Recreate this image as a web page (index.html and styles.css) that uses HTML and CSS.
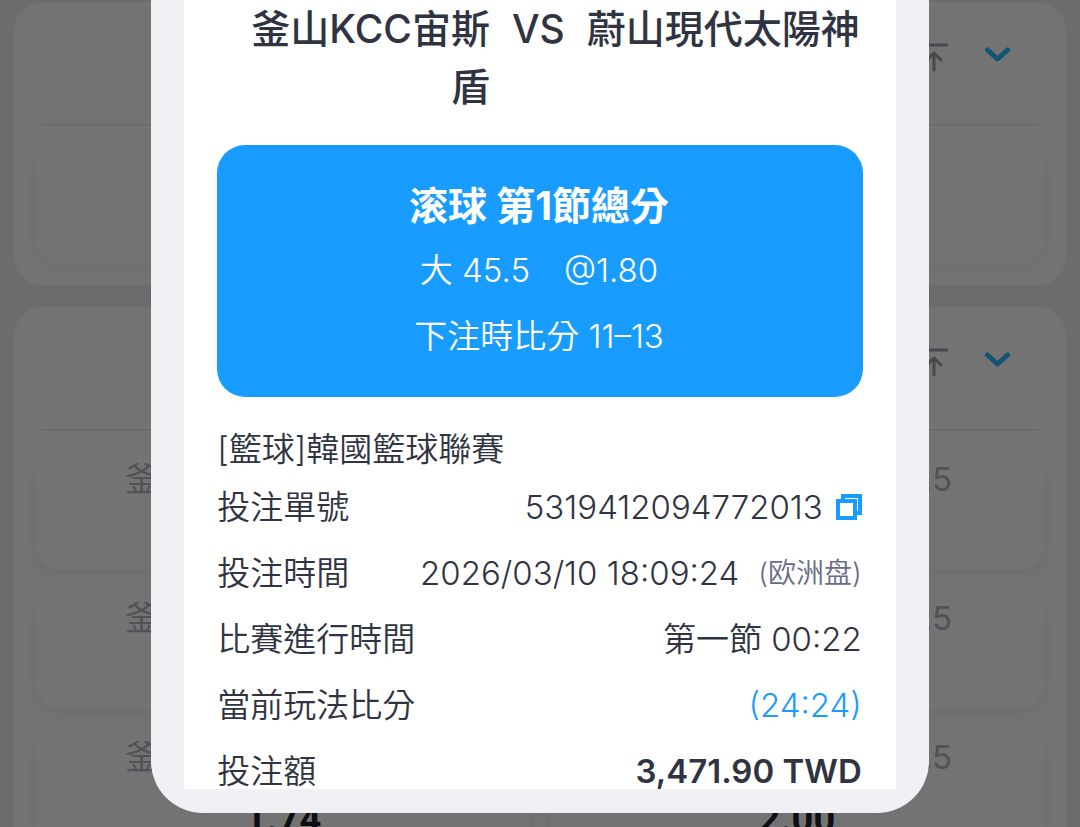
FILE: index.html
```html
<!DOCTYPE html>
<html lang="zh-Hant">
<head>
<meta charset="utf-8">
<meta name="viewport" content="width=device-width, initial-scale=1">
<title>注單詳情</title>
<link rel="stylesheet" href="styles.css">
</head>
<body>
<main class="markets">
  <section class="market">
    <header class="market-head">
      <button class="icon-btn" type="button" aria-label="置頂"><svg class="icon icon-top" viewBox="0 0 28 32"><path d="M1 3H27M14 28V11M7 18L14 11L21 18"/></svg></button>
      <button class="icon-btn" type="button" aria-label="收起"><svg class="icon icon-fold" viewBox="0 0 28 32"><path d="M3.500 8L13.500 17L23.500 8"/></svg></button>
    </header>
    <div class="odds-row"><div class="cell cell-wide"></div></div>
  </section>
  <section class="market">
    <header class="market-head">
      <button class="icon-btn" type="button" aria-label="置頂"><svg class="icon icon-top" viewBox="0 0 28 32"><path d="M1 3H27M14 28V11M7 18L14 11L21 18"/></svg></button>
      <button class="icon-btn" type="button" aria-label="收起"><svg class="icon icon-fold" viewBox="0 0 28 32"><path d="M3.500 8L13.500 17L23.500 8"/></svg></button>
    </header>
    <div class="odds-row">
      <div class="cell"><span class="cell-name">釜</span></div>
      <div class="cell"><span class="cell-name cell-name-end">.5</span></div>
    </div>
    <div class="odds-row">
      <div class="cell"><span class="cell-name">釜</span></div>
      <div class="cell"><span class="cell-name cell-name-end">.5</span></div>
    </div>
    <div class="odds-row">
      <div class="cell"><span class="cell-name">釜</span><span class="cell-odds">1.74</span></div>
      <div class="cell"><span class="cell-name cell-name-end">.5</span><span class="cell-odds">2.00</span></div>
    </div>
  </section>
</main>

<div class="overlay">
  <div class="dialog" role="dialog" aria-modal="true" aria-labelledby="match">
    <div class="slip">
      <h2 class="match" id="match">
        <span>釜山KCC宙斯</span><span>VS</span><span>蔚山現代太陽神</span><span class="match-tail">盾</span>
      </h2>
      <div class="pick">
        <p class="pick-title">滚球 第1節總分</p>
        <p class="pick-line"><span>大 <span class="num">45.5</span></span><span class="num">@1.80</span></p>
        <p class="pick-line"><span>下注時比分 <span class="num">11–13</span></span></p>
      </div>
      <p class="league">[籃球]韓國籃球聯賽</p>
      <dl class="details">
        <div class="detail">
          <dt>投注單號</dt>
          <dd><span class="num">5319412094772013</span><button class="copy" type="button" aria-label="複製"><svg class="icon-copy" viewBox="0 0 26 26"><path d="M2 7H19V24H2ZM7 7V2H24V19H19"/></svg></button></dd>
        </div>
        <div class="detail">
          <dt>投注時間</dt>
          <dd class="spaced"><span class="num">2026/03/10 18:09:24</span><small class="odds-type">(欧洲盘)</small></dd>
        </div>
        <div class="detail">
          <dt>比賽進行時間</dt>
          <dd><span>第一節 <span class="num">00:22</span></span></dd>
        </div>
        <div class="detail">
          <dt>當前玩法比分</dt>
          <dd class="score num">(24:24)</dd>
        </div>
        <div class="detail">
          <dt>投注額</dt>
          <dd class="stake num">3,471.90 TWD</dd>
        </div>
      </dl>
    </div>
  </div>
</div>
</body>
</html>
```

FILE: styles.css
```css
* { box-sizing: border-box; }

html, body { height: 100%; }

body {
  margin: 0;
  overflow: hidden;
  background: #f0f0f5;
  color: #303442;
  font-family: Inter, "Noto Sans CJK TC", sans-serif;
  font-size: 33px;
}

h2, p, dl, dd { margin: 0; }

button {
  display: flex;
  padding: 0;
  border: 0;
  background: none;
}

/* Market list behind the dialog */
.markets {
  display: flex;
  flex-direction: column;
  gap: 22px;
  padding: 2px 14px;
}

.market {
  display: flex;
  flex-direction: column;
  gap: 19px;
  padding: 0 22px 20px;
  border-radius: 28px;
  background: #fff;
}

.market-head {
  display: flex;
  justify-content: flex-end;
  gap: 36px;
  height: 124px;
  margin: 0 5px;
  padding: 40px 27px 0;
  border-bottom: 2px solid #efeff3;
}

.icon {
  width: 28px;
  height: 32px;
  fill: none;
  stroke-linecap: round;
  stroke-linejoin: round;
}

.icon-top { stroke: #9aa1ac; stroke-width: 3; }
.icon-fold { stroke: #2cb8ff; stroke-width: 5; }

.odds-row {
  display: flex;
  gap: 20px;
}

.cell {
  flex: 1;
  height: 120px;
  border-radius: 24px;
  background: #fff;
  box-shadow: 0 3px 14px rgba(40, 40, 70, 0.08);
}

.cell-name {
  display: block;
  padding: 0 89px;
  color: #b4b4c2;
  font-weight: 400;
  line-height: 58px;
}

.cell-name-end { padding: 0 92px; text-align: right; }

.cell-odds {
  display: block;
  color: #20212c;
  font-family: Roboto, sans-serif;
  font-size: 38px;
  font-weight: 700;
  line-height: 66px;
  text-align: center;
}

/* Bet slip dialog */
.overlay {
  position: fixed;
  inset: 0;
  display: flex;
  justify-content: center;
  padding-bottom: 14px;
  background: rgba(0, 0, 0, 0.55);
}

.dialog {
  display: flex;
  width: 72%;
  padding: 0 33px 24px;
  border-radius: 0 0 52px 52px;
  background: #f0f0f5;
}

.slip {
  flex: 1;
  min-width: 0;
  overflow: hidden;
  padding: 0 33px;
  background: #fff;
}

.match {
  display: grid;
  grid-template-columns: auto auto auto;
  justify-content: end;
  column-gap: 22px;
  margin-bottom: 29px;
  padding-right: 3px;
  font-size: 39px;
  font-weight: 500;
  line-height: 58px;
}

.match-tail { justify-self: end; }

.pick {
  padding: 28px 30px 28px 28px;
  border-radius: 28px;
  background: #189cff;
  color: #fff;
  line-height: 65px;
  text-align: center;
}

.pick-title { font-size: 39px; font-weight: 700; }

.pick-line {
  display: flex;
  justify-content: center;
  gap: 34px;
  font-weight: 350;
}

.pick-line:last-child { line-height: 66px; }

.league { margin-top: 27px; line-height: 50px; }

.detail {
  display: flex;
  justify-content: space-between;
  line-height: 66px;
}

.detail dd {
  display: flex;
  align-items: center;
  gap: 13px;
}

.detail .spaced { gap: 19px; }

.league, .detail { font-weight: 350; }

.odds-type { color: #686c86; font-size: 28px; }

.detail .score { color: #189cff; }

.detail .stake { font-weight: 600; }

.details { padding-right: 1px; }

.icon-copy {
  width: 26px;
  height: 26px;
  fill: none;
  stroke: #189cff;
  stroke-width: 4;
}
```
